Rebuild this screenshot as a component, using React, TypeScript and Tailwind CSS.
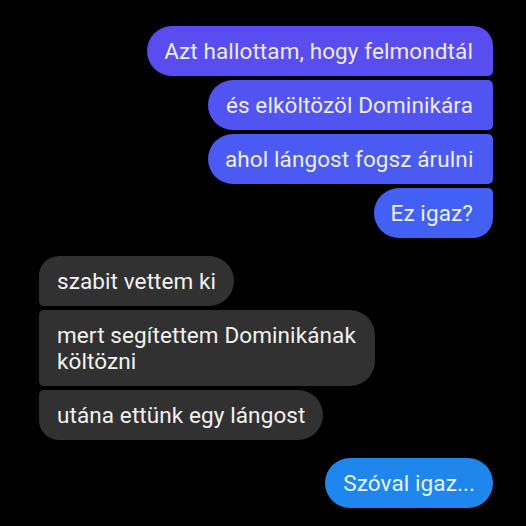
const App = () => {
  return (
    <div
      className="w-[526px] h-[526px] bg-black overflow-hidden pt-[26px] pl-[39px] pr-[33px] text-[22.5px] leading-[26px] tracking-[0.1px]"
      style={{ fontFamily: "Roboto, 'Noto Sans', sans-serif" }}
    >
      <div className="flex flex-col items-end gap-[4px]">
        <div className="bg-[#5a4df0] text-[#ecebff] py-3 pl-[17px] pr-[20px] rounded-l-[25px] rounded-tr-[20px] rounded-br-[5px] whitespace-nowrap">
          Azt hallottam, hogy felmondtál
        </div>
        <div className="bg-[#5254f1] text-[#ecebff] py-3 pl-[17px] pr-[20px] rounded-l-[25px] rounded-r-[5px] w-[285px] text-right whitespace-nowrap">
          és elköltözöl Dominikára
        </div>
        <div className="bg-[#4a5af2] text-[#ecedff] py-3 pl-[17px] pr-[20px] rounded-l-[25px] rounded-r-[5px] w-[285px] text-right whitespace-nowrap">
          ahol lángost fogsz árulni
        </div>
        <div className="bg-[#4261f4] text-[#eceeff] py-3 pl-[17px] pr-[20px] rounded-l-[25px] rounded-tr-[5px] rounded-br-[20px]">
          Ez igaz?
        </div>
      </div>

      <div className="flex flex-col items-start gap-[4px] mt-[18px]">
        <div className="bg-[#313131] text-[#f2f2f2] py-3 px-[18px] rounded-r-[25px] rounded-tl-[20px] rounded-bl-[5px]">
          szabit vettem ki
        </div>
        <div className="bg-[#313131] text-[#f2f2f2] py-3 px-[18px] rounded-r-[25px] rounded-l-[5px] w-[336px]">
          mert segítettem Dominikának költözni
        </div>
        <div className="bg-[#313131] text-[#f2f2f2] py-3 px-[18px] rounded-r-[25px] rounded-tl-[5px] rounded-bl-[20px] whitespace-nowrap">
          utána ettünk egy lángost
        </div>
      </div>

      <div className="flex flex-col items-end mt-[18px]">
        <div className="bg-[#1f86ee] text-[#e6f4ff] py-3 px-[18px] rounded-[25px]">
          Szóval igaz...
        </div>
      </div>
    </div>
  );
};

export default App;
